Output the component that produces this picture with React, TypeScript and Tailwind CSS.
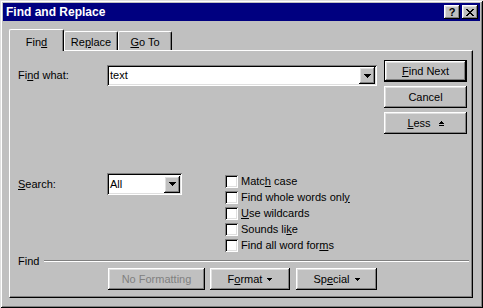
import React from 'react';

const raised =
  'bg-[#c0c0c0] shadow-[inset_-1px_-1px_#000,inset_1px_1px_#fff,inset_-2px_-2px_#808080,inset_2px_2px_#dfdfdf]';
const sunken =
  'bg-white shadow-[inset_1px_1px_#808080,inset_-1px_-1px_#fff,inset_2px_2px_#000,inset_-2px_-2px_#dfdfdf]';

const DownArrow = () => (
  <svg width="7" height="4" viewBox="0 0 7 4" shapeRendering="crispEdges">
    <rect x="0" y="0" width="7" height="1" fill="#000" />
    <rect x="1" y="1" width="5" height="1" fill="#000" />
    <rect x="2" y="2" width="3" height="1" fill="#000" />
    <rect x="3" y="3" width="1" height="1" fill="#000" />
  </svg>
);

const SmallDown = () => (
  <svg width="5" height="3" viewBox="0 0 5 3" shapeRendering="crispEdges">
    <rect x="0" y="0" width="5" height="1" fill="#000" />
    <rect x="1" y="1" width="3" height="1" fill="#000" />
    <rect x="2" y="2" width="1" height="1" fill="#000" />
  </svg>
);

const LessIcon = () => (
  <svg width="5" height="5" viewBox="0 0 5 5" shapeRendering="crispEdges">
    <rect x="2" y="0" width="1" height="1" fill="#000" />
    <rect x="1" y="1" width="3" height="1" fill="#000" />
    <rect x="0" y="2" width="5" height="1" fill="#000" />
    <rect x="0" y="4" width="5" height="1" fill="#000" />
  </svg>
);

const Combo = ({ value, width }: { value: string; width: string }) => (
  <div className={`${sunken} ${width} h-[21px] flex items-center p-[2px]`}>
    <span className="flex-1 pl-[1px]">{value}</span>
    <div className={`${raised} w-[16px] h-[17px] flex items-center justify-center`}>
      <DownArrow />
    </div>
  </div>
);

const Button = ({
  children,
  className = '',
  gap = 'gap-[5px]',
  isDefault = false,
  disabled = false,
}: {
  children: React.ReactNode;
  className?: string;
  gap?: string;
  isDefault?: boolean;
  disabled?: boolean;
}) => (
  <div className={`${className} h-[22px] ${isDefault ? 'border border-black' : ''}`}>
    <div
      className={`${raised} w-full h-full flex items-center justify-center ${gap} ${
        disabled ? 'text-[#808080]' : ''
      }`}
    >
      {children}
    </div>
  </div>
);

const Checkbox = ({ children }: { children: React.ReactNode }) => (
  <div className="h-[16px] flex items-start gap-[3px]">
    <div className={`${sunken} w-[13px] h-[13px]`} />
    <span>{children}</span>
  </div>
);

export default function App() {
  return (
    <div className="w-[483px] h-[308px] bg-[#c0c0c0] p-[3px] flex flex-col text-black text-[11px] leading-[13px] font-['Liberation_Sans',Arial,sans-serif] shadow-[inset_1px_1px_#dfdfdf,inset_-1px_-1px_#000,inset_2px_2px_#fff,inset_-2px_-2px_#808080]">
      {/* Title bar */}
      <div className="h-[18px] bg-[#000080] flex items-center pl-[3px] pr-[2px]">
        <span className="flex-1 text-white font-bold text-[12px]">Find and Replace</span>
        <div className="flex gap-[2px]">
          <div className={`${raised} w-[16px] h-[14px] flex items-center justify-center font-bold text-[11px]`}>
            ?
          </div>
          <div className={`${raised} w-[16px] h-[14px] flex items-center justify-center`}>
            <svg width="8" height="7" viewBox="0 0 8 7" shapeRendering="crispEdges">
              <path d="M0 0h2v1h-2zM6 0h2v1h-2zM1 1h2v1h-2zM5 1h2v1h-2zM2 2h4v1h-4zM3 3h2v1h-2zM2 4h4v1h-4zM1 5h2v1h-2zM5 5h2v1h-2zM0 6h2v1h-2zM6 6h2v1h-2z" fill="#000" />
            </svg>
          </div>
        </div>
      </div>

      {/* Body */}
      <div className="pt-[8px] pl-[6px]">
        {/* Tabs */}
        <div className="flex items-end h-[21px]">
          <div className="relative z-10 w-[55px] h-[22px] -mb-[1px] bg-[#c0c0c0] border-l border-t border-r border-l-white border-t-white border-r-black rounded-t-[2px] shadow-[inset_-1px_0_#808080] flex justify-center pt-[6px]">
            <span>
              Fin<u>d</u>
            </span>
          </div>
          <div className="w-[54px] h-[19px] border-l border-t border-r border-l-white border-t-white border-r-black rounded-t-[2px] shadow-[inset_-1px_0_#808080] flex justify-center pt-[4px]">
            <span>
              Re<u>p</u>lace
            </span>
          </div>
          <div className="w-[54px] h-[19px] border-l border-t border-r border-l-white border-t-white border-r-black rounded-t-[2px] shadow-[inset_-1px_0_#808080] flex justify-center pt-[4px]">
            <span>
              <u>G</u>o To
            </span>
          </div>
        </div>

        {/* Tab panel */}
        <div className="w-[464px] h-[248px] border border-t-white border-l-white border-r-black border-b-black shadow-[inset_-1px_-1px_#808080] flex flex-col">
          {/* Find what + buttons */}
          <div className="flex items-start">
            <div className="mt-[14px] ml-[8px] flex items-center">
              <span className="w-[89px]">
                Fi<u>n</u>d what:
              </span>
              <Combo value="text" width="w-[270px]" />
            </div>
            <div className="ml-auto mt-[9px] mr-[5px] flex flex-col gap-[4px]">
              <Button className="w-[83px]" isDefault>
                <span>
                  <u>F</u>ind Next
                </span>
              </Button>
              <Button className="w-[83px]">
                <span>Cancel</span>
              </Button>
              <Button className="w-[83px]" gap="gap-[8px]">
                <span>
                  <u>L</u>ess
                </span>
                <LessIcon />
              </Button>
            </div>
          </div>

          {/* Search options */}
          <div className="mt-[39px] ml-[8px] flex items-start">
            <span className="w-[89px] h-[22px] flex items-center">
              <span>
                <u>S</u>earch:
              </span>
            </span>
            <Combo value="All" width="w-[75px] h-[22px]" />
            <div className="ml-[43px] mt-[2px] flex flex-col">
              <Checkbox>
                Matc<u>h</u> case
              </Checkbox>
              <Checkbox>
                Find whole words onl<u>y</u>
              </Checkbox>
              <Checkbox>
                <u>U</u>se wildcards
              </Checkbox>
              <Checkbox>
                Sounds li<u>k</u>e
              </Checkbox>
              <Checkbox>
                Find all word for<u>m</u>s
              </Checkbox>
            </div>
          </div>

          {/* Separator */}
          <div className="h-[12px] ml-[8px] mr-[3px] flex items-center">
            <span>Find</span>
            <div className="flex-1 ml-[5px] h-[2px] border-t border-t-[#808080] border-b border-b-white" />
          </div>

          {/* Bottom buttons */}
          <div className="mt-[1px] flex">
            <Button className="ml-[98px] w-[97px]" disabled>
              <span>No Formatting</span>
            </Button>
            <Button className="ml-[5px] w-[80px]">
              <span>
                F<u>o</u>rmat
              </span>
              <SmallDown />
            </Button>
            <Button className="ml-[6px] w-[81px]">
              <span>
                Sp<u>e</u>cial
              </span>
              <SmallDown />
            </Button>
          </div>
        </div>
      </div>
    </div>
  );
}
